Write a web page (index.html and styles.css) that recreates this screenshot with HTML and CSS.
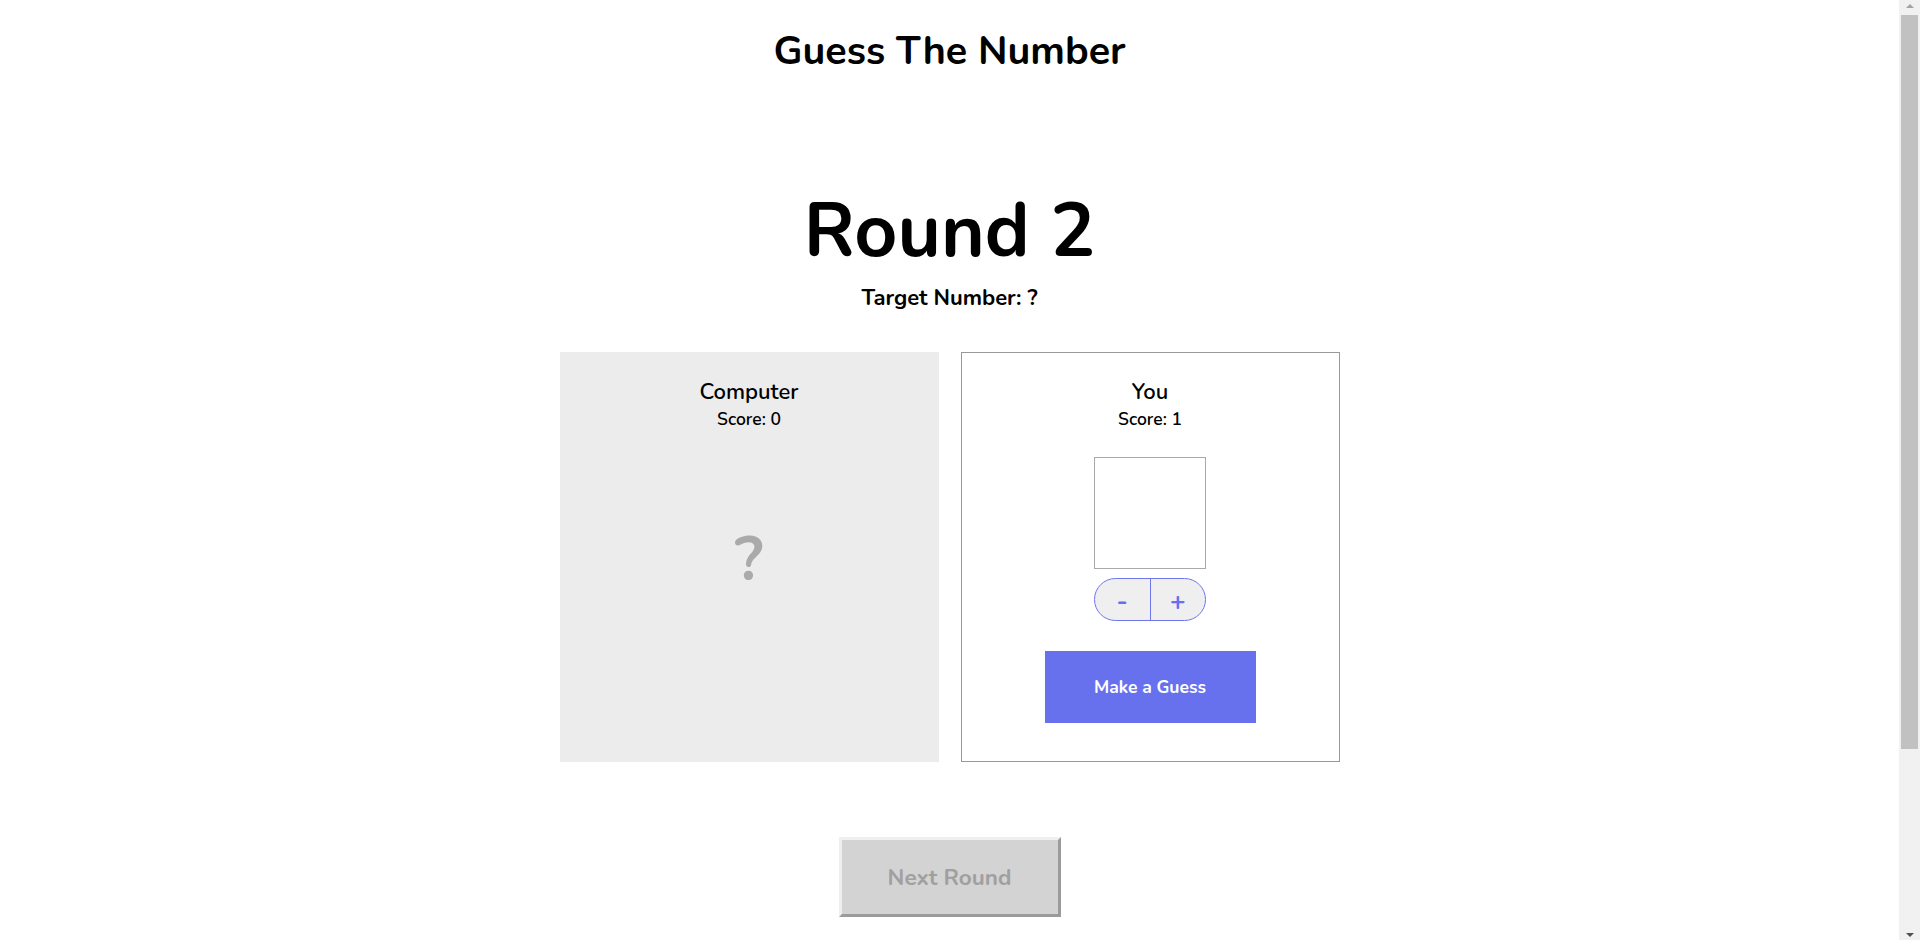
FILE: index.html
```html
<!DOCTYPE html>
<html lang="en">
<head>
<meta charset="utf-8">
<title>Guess The Number</title>
<link rel="stylesheet" href="styles.css">
</head>
<body>
<div class="window">
  <div class="viewport">
    <div class="app">
      <header class="header">
        <h1 class="title">Guess The Number</h1>
      </header>
      <main class="game">
        <h2 class="round">Round 2</h2>
        <p class="target">Target Number: ?</p>
        <div class="players">
          <section class="player player-computer">
            <h3 class="player-name">Computer</h3>
            <p class="score">Score: 0</p>
            <div class="mystery">?</div>
          </section>
          <section class="player player-you">
            <h3 class="player-name">You</h3>
            <p class="score">Score: 1</p>
            <input class="guess-input" type="text" aria-label="Your guess">
            <div class="stepper">
              <button class="step-btn" type="button">-</button>
              <button class="step-btn step-plus" type="button">+</button>
            </div>
            <button class="guess-btn" type="button">Make a Guess</button>
          </section>
        </div>
        <button class="next-btn" type="button" disabled>Next Round</button>
      </main>
    </div>
  </div>
  <div class="scrollbar" aria-hidden="true">
    <div class="sb-button"><span class="sb-arrow sb-up"></span></div>
    <div class="sb-track">
      <div class="sb-thumb"></div>
    </div>
    <div class="sb-button"><span class="sb-arrow sb-down"></span></div>
  </div>
</div>
</body>
</html>
```
FILE: styles.css
```css
html, body {
  margin: 0;
  padding: 0;
  height: 100%;
  background: #ffffff;
  overflow: hidden;
}

body {
  font-family: "Nunito", "Lato", "Noto Sans", sans-serif;
  color: #000000;
}

.window {
  display: flex;
  height: 100vh;
}

.viewport {
  flex: 1;
  min-width: 0;
  overflow: hidden;
}

/* scrollbar strip */
.scrollbar {
  width: 21px;
  flex: none;
  background: #f1f1f1;
  display: flex;
  flex-direction: column;
}

.sb-button {
  height: 15px;
  flex: none;
  display: flex;
  align-items: center;
  justify-content: center;
}

.sb-arrow {
  width: 0;
  height: 0;
  border-left: 4.5px solid transparent;
  border-right: 4.5px solid transparent;
}

.sb-up {
  border-bottom: 4px solid #a3a3a3;
  margin-top: -4px;
}

.sb-down {
  border-top: 4px solid #505050;
  margin-top: 4px;
}

.sb-track {
  flex: 1;
  display: flex;
  flex-direction: column;
}

.sb-thumb {
  height: 734px;
  margin: 0 2px;
  background: #c1c1c1;
}

/* page */
.app {
  display: flex;
  flex-direction: column;
  align-items: center;
  padding-bottom: 248px;
}

.header {
  width: 100%;
  display: flex;
  justify-content: center;
}

.title {
  margin: 32px 0 0;
  font-size: 39.5px;
  line-height: 1;
  font-weight: 700;
}

.game {
  display: flex;
  flex-direction: column;
  align-items: center;
}

.round {
  margin: 122.5px 0 0;
  font-size: 75px;
  line-height: 1;
  font-weight: 700;
}

.target {
  margin: 18px 0 0;
  font-size: 22px;
  line-height: 1;
  font-weight: 700;
}

.players {
  margin-top: 43px;
  display: flex;
  gap: 22px;
}

.player {
  box-sizing: border-box;
  width: 379px;
  height: 410px;
  display: flex;
  flex-direction: column;
  align-items: center;
}

.player-computer {
  background: #ececec;
  padding-top: 29px;
}

.player-you {
  background: #ffffff;
  border: 1px solid #999999;
  padding-top: 28px;
}

.player-name {
  margin: 0;
  font-size: 22px;
  line-height: 1;
  font-weight: 600;
}

.score {
  margin: 7.5px 0 0;
  font-size: 17.5px;
  line-height: 1;
  font-weight: 600;
}

.mystery {
  margin-top: 101px;
  font-size: 62px;
  line-height: 1;
  font-weight: 700;
  color: #aaaaaa;
}

.guess-input {
  box-sizing: border-box;
  margin-top: 29px;
  width: 112px;
  height: 112px;
  border: 1px solid #a9a9a9;
  border-radius: 0;
  padding: 0;
  background: #ffffff;
  font-family: inherit;
  font-size: 40px;
  text-align: center;
  outline: none;
}

.stepper {
  box-sizing: border-box;
  margin-top: 9px;
  width: 112px;
  height: 43px;
  display: flex;
  border: 1px solid #6f77ee;
  border-radius: 22px;
  background: #efefef;
  overflow: hidden;
}

.step-btn {
  flex: 1;
  margin: 0;
  padding: 5px 0 0;
  border: 0;
  background: transparent;
  color: #6770ee;
  font-family: inherit;
  font-size: 26px;
  font-weight: 700;
  line-height: 1;
  display: flex;
  align-items: center;
  justify-content: center;
}

.step-plus {
  border-left: 1px solid #6f77ee;
}

.guess-btn {
  margin-top: 30px;
  width: 211px;
  height: 72px;
  border: 0;
  padding: 0;
  background: #6771ee;
  color: #ffffff;
  font-family: inherit;
  font-size: 17.5px;
  font-weight: 700;
}

.next-btn {
  box-sizing: border-box;
  margin-top: 75px;
  width: 222px;
  height: 80px;
  padding: 0;
  background: #d3d3d3;
  border-style: solid;
  border-width: 3px;
  border-color: #efefef #9b9b9b #9b9b9b #efefef;
  color: #a0a0a0;
  font-family: inherit;
  font-size: 22.5px;
  font-weight: 700;
}
```
